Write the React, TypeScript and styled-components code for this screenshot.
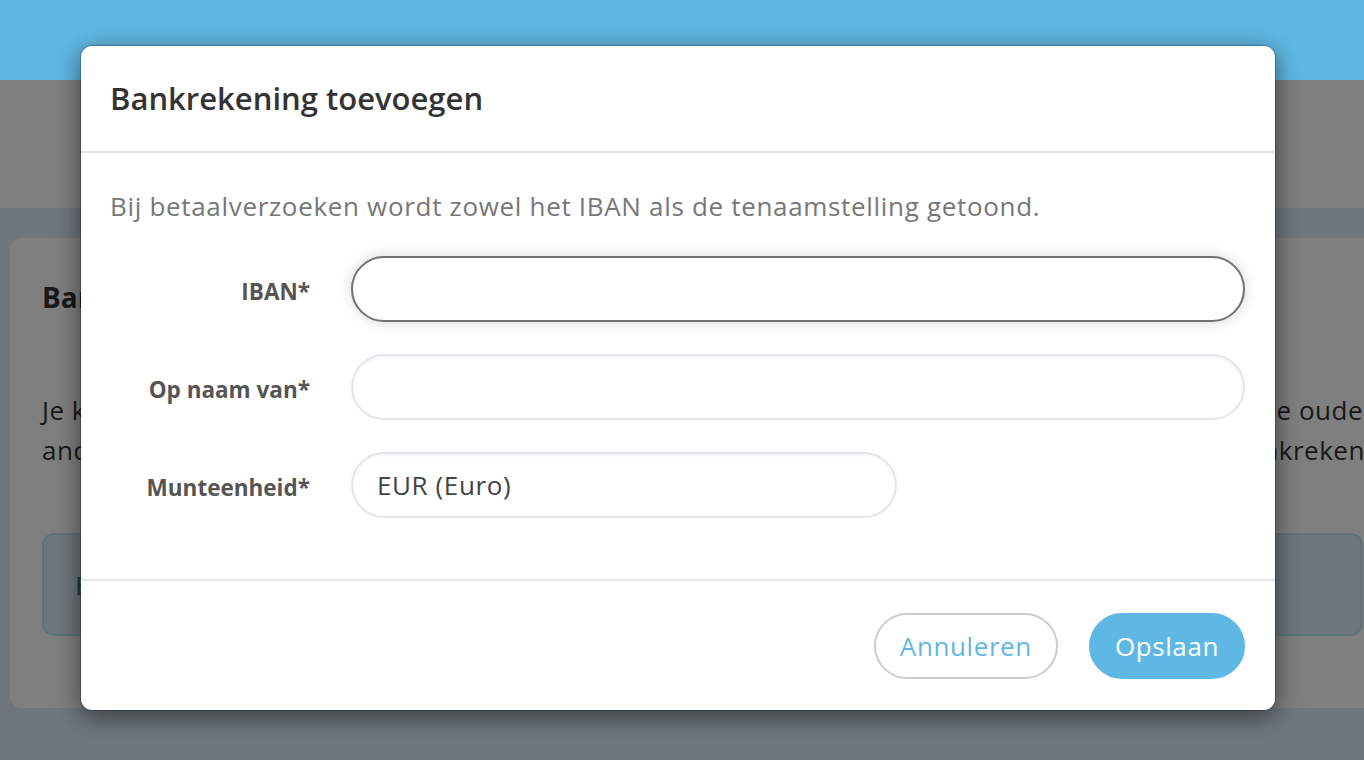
import styled, { createGlobalStyle } from "styled-components";

const GlobalStyle = createGlobalStyle`
  html, body {
    margin: 0;
    padding: 0;
    overflow: hidden;
    background: #deeefa;
    font-family: "Open Sans", "Noto Sans", sans-serif;
  }
  * { box-sizing: border-box; }
`;

const Page = styled.div`
  position: relative;
  width: 1364px;
  height: 760px;
  overflow: hidden;
`;

const TopBar = styled.header`
  position: relative;
  z-index: 20;
  height: 80px;
  background: #5fb8e3;
`;

const SubBar = styled.div`
  height: 128px;
  background: #ffffff;
`;

const Content = styled.main`
  padding: 30px 0 0 10px;
`;

const Card = styled.section`
  width: 1385px;
  height: 470px;
  background: #ffffff;
  border-radius: 12px;
  padding: 40px 32px;
`;

const CardTitle = styled.h2`
  margin: 0 0 74px;
  font-size: 28px;
  font-weight: 700;
  color: #333;
`;

const CardText = styled.div`
  margin: 0 0 63px;
  font-size: 26px;
  line-height: 40px;
  letter-spacing: 0.5px;
  color: #333;
`;

// line split in a start and an end part, the end part runs to the right edge
const CardLine = styled.div`
  display: flex;
  justify-content: space-between;
  white-space: nowrap;
`;

const LineEnd = styled.span<{ $overhang?: number }>`
  margin-right: ${({ $overhang }) => `-${$overhang ?? 0}px`};
`;

const InfoAlert = styled.div`
  height: 103px;
  background: #d9edf7;
  border: 2px solid #bce8f1;
  border-radius: 12px;
  padding: 0 31px;
  display: flex;
  align-items: center;
  font-size: 26px;
  color: #31708f;
`;

const Backdrop = styled.div`
  position: absolute;
  top: 80px;
  left: 0;
  right: 0;
  bottom: 0;
  z-index: 10;
  background: rgba(0, 0, 0, 0.5);
`;

const ModalLayer = styled.div`
  position: absolute;
  inset: 0;
  z-index: 30;
  padding: 45px 0 0 80px;
`;

const Modal = styled.div`
  width: 1196px;
  background: #ffffff;
  border: 1px solid rgba(0, 0, 0, 0.2);
  border-radius: 12px;
  box-shadow: 0 6px 24px rgba(0, 0, 0, 0.5);
  background-clip: padding-box;
`;

const ModalHeader = styled.div`
  height: 107px;
  padding: 0 29px;
  display: flex;
  align-items: center;
  border-bottom: 2px solid #e5e5e5;
`;

const ModalTitle = styled.h3`
  margin: 0 0 2px;
  font-size: 31px;
  font-weight: 600;
  color: #333;
`;

const ModalBody = styled.div`
  padding: 35px 30px 61px 29px;
`;

const Lead = styled.p`
  margin: 0 0 32px;
  font-size: 26px;
  line-height: 36px;
  letter-spacing: 0.68px;
  color: #777;
`;

const Form = styled.form`
  display: grid;
  grid-template-columns: 200px 1fr;
  column-gap: 41px;
  row-gap: 32px;
  align-items: center;
`;

const Label = styled.label`
  text-align: right;
  font-size: 22.5px;
  font-weight: 700;
  color: #555;
  padding-top: 4px;
`;

const Input = styled.input<{ $focused?: boolean; $width?: number }>`
  width: ${({ $width }) => ($width ? `${$width}px` : "100%")};
  height: 66px;
  padding: 0 24px;
  border-radius: 33px;
  border: 2px solid ${({ $focused }) => ($focused ? "#717171" : "#e1e5ea")};
  box-shadow: ${({ $focused }) =>
    $focused ? "0 0 14px rgba(0, 0, 0, 0.16)" : "inset 0 2px 3px rgba(0, 0, 0, 0.04)"};
  font-family: inherit;
  font-size: 26px;
  letter-spacing: 0.6px;
  color: #444;
  background: #fff;
  outline: none;
`;

const ModalFooter = styled.div`
  border-top: 2px solid #e5e5e5;
  padding: 32px 30px 31px;
  display: flex;
  justify-content: flex-end;
  gap: 31px;
`;

const Button = styled.button<{ $primary?: boolean }>`
  height: 66px;
  padding: 0 24px;
  border-radius: 33px;
  font-family: inherit;
  font-size: 26px;
  letter-spacing: 0.6px;
  cursor: pointer;
  border: 2px solid ${({ $primary }) => ($primary ? "#5fb8e3" : "#cccccc")};
  background: ${({ $primary }) => ($primary ? "#5fb8e3" : "#ffffff")};
  color: ${({ $primary }) => ($primary ? "#ffffff" : "#5fb8e3")};
`;

export default function App() {
  return (
    <>
      <GlobalStyle />
      <Page>
        <TopBar />
        <SubBar />
        <Content>
          <Card>
            <CardTitle>Bankrekeningen</CardTitle>
            <CardText>
              <CardLine>
                <span>Je kunt meerdere bankrekeningen toevoegen. Bij het wijzigen blijven</span>
                <LineEnd>de oude</LineEnd>
              </CardLine>
              <CardLine>
                <span>andere betaalverzoeken ongewijzigd, nieuwe verzoeken gebruiken</span>
                <LineEnd $overhang={40}>je bankrekening</LineEnd>
              </CardLine>
            </CardText>
            <InfoAlert>Er zijn nog geen bankrekeningen toegevoegd.</InfoAlert>
          </Card>
        </Content>
        <Backdrop />
        <ModalLayer>
          <Modal>
            <ModalHeader>
              <ModalTitle>Bankrekening toevoegen</ModalTitle>
            </ModalHeader>
            <ModalBody>
              <Lead>Bij betaalverzoeken wordt zowel het IBAN als de tenaamstelling getoond.</Lead>
              <Form>
                <Label htmlFor="iban">IBAN*</Label>
                <Input id="iban" $focused />
                <Label htmlFor="naam">Op naam van*</Label>
                <Input id="naam" />
                <Label htmlFor="munt">Munteenheid*</Label>
                <Input id="munt" $width={546} defaultValue="EUR (Euro)" readOnly />
              </Form>
            </ModalBody>
            <ModalFooter>
              <Button type="button">Annuleren</Button>
              <Button type="button" $primary>
                Opslaan
              </Button>
            </ModalFooter>
          </Modal>
        </ModalLayer>
      </Page>
    </>
  );
}
